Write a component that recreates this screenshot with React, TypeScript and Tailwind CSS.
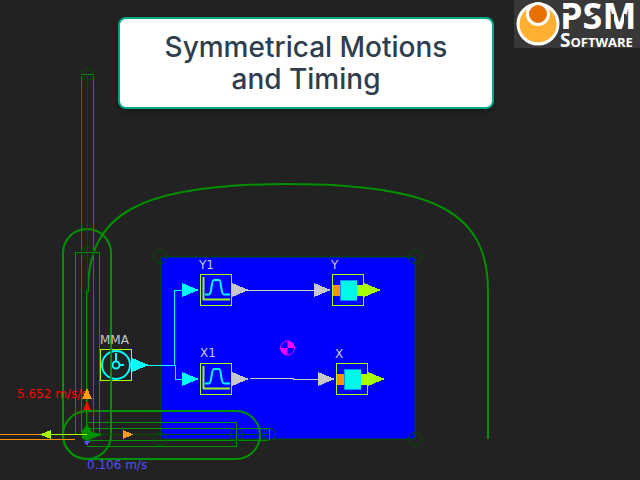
import React from "react";

const GREEN = "#009000";
const DARK = "#005000";
const LIME = "#a8ff00";
const CYAN = "#00ffff";
const GREY = "#c8c8c8";

function Label({ x, y, fill = GREY, children }: { x: number; y: number; fill?: string; children: React.ReactNode }) {
  return (
    <text x={x} y={y} fill={fill} className="font-['DejaVu_Sans',Verdana,sans-serif] text-[12px]">
      {children}
    </text>
  );
}

function Arrow({ x, y, fill }: { x: number; y: number; fill: string }) {
  return <path d={`M${x} ${y - 7}L${x + 17} ${y}L${x} ${y + 7}Z`} fill={fill} shapeRendering="crispEdges" />;
}

function Frame() {
  return <rect x="0.5" y="0.5" width="31" height="31" fill="none" stroke={LIME} />;
}

function MotionBlock({ x, y }: { x: number; y: number }) {
  return (
    <g transform={`translate(${x} ${y})`}>
      <Frame />
      <path d="M3.5 3V26M3 25.5H30" stroke="#a0f020" strokeWidth="2" fill="none" />
      <path d="M5 20.5H9C12 20.5 11 6 14 6H19C22 6 20 20.5 24 20.5H30" stroke={CYAN} strokeWidth="2" fill="none" />
      <Arrow x={32} y={16} fill={GREY} />
    </g>
  );
}

function SliderBlock({ x, y }: { x: number; y: number }) {
  return (
    <g transform={`translate(${x} ${y})`}>
      <rect x="1" y="11" width="8" height="11" fill="#ff9010" />
      <rect x="24" y="11" width="8" height="11" fill={LIME} />
      <rect x="8" y="6" width="17" height="21" fill="#0090ff" />
      <rect x="9" y="7" width="16" height="19" fill="#00f8e8" />
      <Frame />
      <Arrow x={32} y={16} fill={LIME} />
    </g>
  );
}

function Diagram() {
  return (
    <svg viewBox="0 0 640 480" className="block h-screen w-full" role="img" aria-label="Mechanism with motion blocks">
      <rect x="161" y="257" width="254" height="182" fill="#0000ff" stroke={DARK} />

      <g fill="none" stroke={GREEN} strokeWidth="2">
        <rect x="63" y="229" width="48" height="230" rx="24" />
        <rect x="63" y="411" width="197" height="48" rx="24" />
        <path d="M87 435V291H88C88 213 140 184 288 184S488 213 488 291V439" />
      </g>
      <g fill="none" stroke={GREEN} shapeRendering="crispEdges">
        <path d="M75.5 434V252.5H99.5V434M81.5 434V74.5H93.5V434" />
        <path d="M87 422.5H236.5V446.5H87M87 428.5H269.5V440.5H87" />
      </g>
      <g fill="none" stroke={DARK}>
        <path d="M87.5 74V434M87 434.5H269" shapeRendering="crispEdges" />
        <circle cx="87.5" cy="74.5" r="6" />
        <circle cx="87.5" cy="252.5" r="6" />
        <circle cx="236.5" cy="434.5" r="6" />
        <circle cx="269.5" cy="434.5" r="6" />
        <circle cx="160" cy="257" r="6.5" />
        <circle cx="415" cy="257" r="6.5" />
        <circle cx="415" cy="439" r="6.5" />
        <circle cx="160" cy="439" r="6.5" />
      </g>

      <Label x={17} y={398} fill="#ff0000">5.652 m/s/s</Label>
      <Label x={87} y={469} fill="#5050ff">0.106 m/s</Label>

      <circle cx="87" cy="434.5" r="6" fill="none" stroke={DARK} />
      <path d="M87 424L92 432L103 434.5L91 439L87 441L82 438V431Z" fill={GREEN} />
      <g shapeRendering="crispEdges">
        <path d="M0 434.5H42M0 439.5H75" stroke="#ff9010" />
        <path d="M42 434.5H87" stroke={LIME} />
        <path d="M40 434.5L51 430V439Z" fill={LIME} />
        <path d="M123 430L133 434.5L123 439Z" fill="#ff9f10" />
        <path d="M87 401L91 410H83Z" fill="#f00" />
        <path d="M84 441H90L87 446Z" fill="#5050ff" />
        <path d="M87 388L92 399H82Z" fill="#ff9f10" />
      </g>

      <g fill="none" stroke={CYAN} shapeRendering="crispEdges">
        <path d="M148 365.5H174.5V290.5H182M174.5 365.5H175.5V379.5H182" />
      </g>
      <g fill="none" stroke={GREY} shapeRendering="crispEdges">
        <path d="M247 290.5H315M250 378.5H293V379.5H318" />
      </g>
      <Arrow x={182} y={290} fill={CYAN} />
      <Arrow x={182} y={379} fill={CYAN} />
      <Arrow x={314} y={290} fill={GREY} />
      <Arrow x={318} y={379} fill={GREY} />

      <Label x={100} y={344}>MMA</Label>
      <g transform="translate(100 349)">
        <Frame />
        <circle cx="16" cy="16" r="14" fill="none" stroke={CYAN} strokeWidth="2" />
        <circle cx="16" cy="16" r="3.5" fill="none" stroke={CYAN} strokeWidth="2" />
        <path d="M16 12V4M20 16H24" stroke={CYAN} strokeWidth="2" />
        <Arrow x={32} y={16} fill={CYAN} />
      </g>
      <path d="M111 345V385" stroke={GREEN} strokeWidth="2" />

      <Label x={199} y={269}>Y1</Label>
      <MotionBlock x={200} y={274} />
      <Label x={200} y={357}>X1</Label>
      <MotionBlock x={200} y={363} />
      <Label x={331} y={269}>Y</Label>
      <SliderBlock x={332} y={274} />
      <Label x={335} y={358}>X</Label>
      <SliderBlock x={336} y={363} />

      <circle cx="287.5" cy="348" r="7" fill="none" stroke="#ff00ff" />
      <path d="M287.5 348V341A7 7 0 0 1 294.5 348ZM287.5 348V355A7 7 0 0 1 280.5 348Z" fill="#ff00ff" />
    </svg>
  );
}

function Logo() {
  return (
    <div className="flex h-12 w-[126px] items-center bg-[#383838] pl-0.5 text-white">
      <svg viewBox="0 0 44 44" className="h-11 w-11 shrink-0" aria-hidden="true">
        <circle cx="22" cy="22" r="20" fill="#ffb030" stroke="#fff" strokeWidth="3" />
        <circle cx="22" cy="12" r="10.5" fill="#e87000" stroke="#fff" strokeWidth="3" />
      </svg>
      <div className="relative font-['Open_Sans',sans-serif] font-bold">
        <div className="h-8 text-[36px] leading-8">PSM</div>
        <div className="h-4 text-[19px] leading-4 [font-variant:small-caps]">Software</div>
        <svg viewBox="0 0 80 32" className="absolute left-0 top-0 h-8 w-20" aria-hidden="true">
          <path d="M0 9H9V13H0Z" fill="#383838" />
          <path d="M22 21L42 11M53 14V30M65 14V30" stroke="#383838" strokeWidth="2" fill="none" />
        </svg>
      </div>
    </div>
  );
}

export default function App() {
  return (
    <main className="relative min-h-screen w-full overflow-hidden bg-[#222222]">
      <Diagram />
      <header className="absolute inset-x-0 top-0 flex items-start justify-end gap-5">
        <h1 className="mt-[17px] w-[376px] rounded-lg border-2 border-[#00a888] bg-white px-8 py-3 text-center font-['Inter',sans-serif] text-[28px] font-medium leading-8 text-[#2f3e4c] shadow-md shadow-black/20">
          Symmetrical Motions and Timing
        </h1>
        <Logo />
      </header>
    </main>
  );
}
